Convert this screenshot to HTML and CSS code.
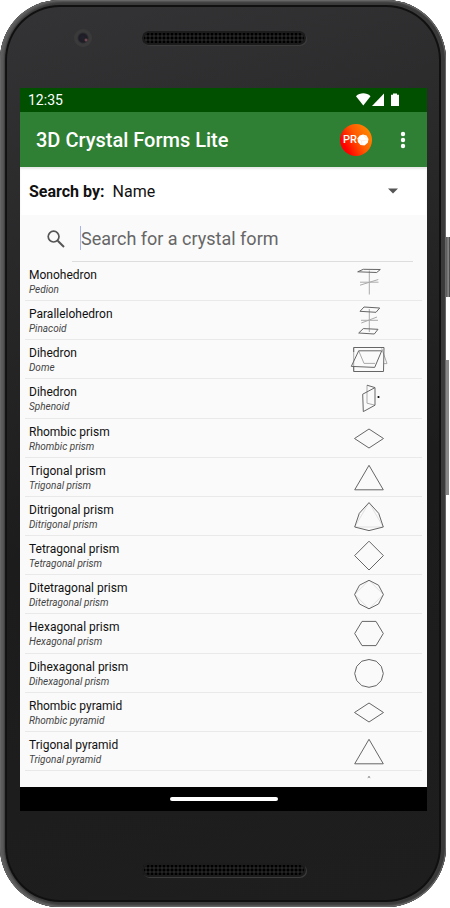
FILE: index.html
```html
<!DOCTYPE html>
<html lang="en">
<head>
    <meta charset="UTF-8">
    <meta name="viewport" content="width=device-width, initial-scale=1.0">
    <title>3D Crystal Forms Lite</title>
    <link rel="stylesheet" href="styles.css">
</head>
<body>
    <div class="phone">
        <span class="side-button power"></span>
        <span class="side-button volume"></span>

        <div class="bezel bezel-top">
            <span class="camera"></span>
            <span class="speaker"></span>
        </div>

        <div class="screen">
            <div class="status-bar">
                <span class="clock">12:35</span>
                <svg class="status-icons" width="44" height="14" viewBox="0 0 44 14" fill="#fff">
                    <path d="M0 3.2C4-.6 10.500-.6 14.500 3.200L7.300 12.500Z"/>
                    <path d="M28 .5V13H16Z"/>
                    <path d="M35 1.700h2V.5h4v1.200h2V13h-8Z"/>
                </svg>
            </div>

            <header class="app-bar">
                <h1>3D Crystal Forms Lite</h1>
                <button class="pro-btn" aria-label="Get the PRO version">
                    <span>PR</span>
                    <svg width="12" height="12" viewBox="0 0 12 12">
                        <path d="M6 .5 9.500 1.600 11.500 5 10.800 8.800 7.500 11.400 3.500 10.900.8 8 .6 4.200 2.700 1.400Z" fill="#fff"/>
                        <path d="M1 4.500 4.500 6.800 10.500 6M4.500 6.800 5 11M6.500.8 8 3.200 11 4.500" fill="none" stroke="#ffd9c4" stroke-width=".5"/>
                    </svg>
                </button>
                <button class="menu-btn" aria-label="More options">
                    <svg width="6" height="18" viewBox="0 0 6 18" fill="#fff">
                        <circle cx="3" cy="3" r="2.200"/>
                        <circle cx="3" cy="9" r="2.200"/>
                        <circle cx="3" cy="15" r="2.200"/>
                    </svg>
                </button>
            </header>

            <div class="filter">
                <label for="searchBy">Search by:</label>
                <select id="searchBy">
                    <option>Name</option>
                </select>
                <svg class="arrow" width="10" height="6" viewBox="0 0 10 6"><path d="M0 .5h10L5 5.500Z" fill="#555"/></svg>
            </div>

            <div class="search">
                <label for="searchInput" aria-label="Search">
                    <svg width="18" height="18" viewBox="0 0 18 18" fill="none" stroke="#555">
                        <circle cx="6.600" cy="6.600" r="5.400" stroke-width="1.700"/>
                        <path d="M10.700 10.700 17 17" stroke-width="2"/>
                    </svg>
                </label>
                <div class="search-field">
                    <span class="caret"></span>
                    <input type="text" id="searchInput" placeholder="Search for a crystal form">
                </div>
            </div>

            <ul class="forms">
                <li>
                    <div class="form-text"><h2>Monohedron</h2><p>Pedion</p></div>
                    <svg class="form-icon" viewBox="0 0 44 39">
                        <path class="faint" d="M22.300 8.500V32.500M13 23.200 31.300 17.500M13 20.200H31.500"/>
                        <path d="M10.700 9.800 16.300 7.300 33.300 7.500 29.700 10.500Z"/>
                    </svg>
                </li>
                <li>
                    <div class="form-text"><h2>Parallelohedron</h2><p>Pinacoid</p></div>
                    <svg class="form-icon" viewBox="0 0 44 39">
                        <path class="faint" d="M22.300 8V31M14.300 22 30 16M14 19.300H31"/>
                        <path d="M13 10.300 17 6 32.700 7 29 11.300ZM11.700 32 16.300 27.600 31 28.300 27.300 33Z"/>
                    </svg>
                </li>
                <li>
                    <div class="form-text"><h2>Dihedron</h2><p>Dome</p></div>
                    <svg class="form-icon" viewBox="0 0 44 39">
                        <path class="faint" d="M11.700 10.800 17 23.400H28M37 23.600H40L34.700 8.400M6.700 7.500V31.500"/>
                        <path d="M6.700 12V7.500H37L36.500 31.500H6.700V27M11.700 10.800H34.700L27.700 27.400 4.300 26.400Z"/>
                    </svg>
                </li>
                <li>
                    <div class="form-text"><h2>Dihedron</h2><p>Sphenoid</p></div>
                    <svg class="form-icon" viewBox="0 0 44 39">
                        <path class="faint" d="M20 6.200V24.200L28 26.200"/>
                        <path d="M15.700 15.200 28 8.600V26.200L16.300 32.600ZM20 6.200 28 8.600"/>
                        <circle class="dot" cx="31.500" cy="18" r="1.100"/>
                    </svg>
                </li>
                <li>
                    <div class="form-text"><h2>Rhombic prism</h2><p>Rhombic prism</p></div>
                    <svg class="form-icon" viewBox="0 0 44 39"><path d="M22 10 36.500 19.500 22 29 7.500 19.500Z"/></svg>
                </li>
                <li>
                    <div class="form-text"><h2>Trigonal prism</h2><p>Trigonal prism</p></div>
                    <svg class="form-icon" viewBox="0 0 44 39"><path d="M22 7.300 36.300 31.800H7.700Z"/></svg>
                </li>
                <li>
                    <div class="form-text"><h2>Ditrigonal prism</h2><p>Ditrigonal prism</p></div>
                    <svg class="form-icon" viewBox="0 0 44 39">
                        <path class="guide" d="M22 5.600 36.300 30H7.700Z"/>
                        <path d="M22 5.600 31.700 16.300 36.300 30 22 33.600 7.700 30 12.300 16.300Z"/>
                    </svg>
                </li>
                <li>
                    <div class="form-text"><h2>Tetragonal prism</h2><p>Tetragonal prism</p></div>
                    <svg class="form-icon" viewBox="0 0 44 39"><path d="M22 5.200 36.400 19.600 22 34 7.600 19.600Z"/></svg>
                </li>
                <li>
                    <div class="form-text"><h2>Ditetragonal prism</h2><p>Ditetragonal prism</p></div>
                    <svg class="form-icon" viewBox="0 0 44 39">
                        <path class="guide" d="M22 5.300 36.400 19.500 22 33.800 7.600 19.500Z"/>
                        <path d="M22 5.300 31.500 10.200 36.400 19.500 31.500 29 22 33.800 12.500 29 7.600 19.500 12.500 10.200Z"/>
                    </svg>
                </li>
                <li>
                    <div class="form-text"><h2>Hexagonal prism</h2><p>Hexagonal prism</p></div>
                    <svg class="form-icon" viewBox="0 0 44 39"><path d="M15 7.400H29L36.300 19.500 29 31.600H15L7.700 19.500Z"/></svg>
                </li>
                <li>
                    <div class="form-text"><h2>Dihexagonal prism</h2><p>Dihexagonal prism</p></div>
                    <svg class="form-icon" viewBox="0 0 44 39"><path d="M22 5.500 29.200 7.200 34.300 12.400 36.300 19.500 34.300 26.600 29.200 31.600 22 33.300 14.800 31.600 9.700 26.600 7.700 19.500 9.700 12.400 14.800 7.200Z"/></svg>
                </li>
                <li>
                    <div class="form-text"><h2>Rhombic pyramid</h2><p>Rhombic pyramid</p></div>
                    <svg class="form-icon" viewBox="0 0 44 39"><path d="M22 10 36.500 19.500 22 29 7.500 19.500Z"/></svg>
                </li>
                <li>
                    <div class="form-text"><h2>Trigonal pyramid</h2><p>Trigonal pyramid</p></div>
                    <svg class="form-icon" viewBox="0 0 44 39"><path d="M22 7.300 36.300 31.800H7.700Z"/></svg>
                </li>
                <li class="partial">
                    <svg class="form-icon" viewBox="0 0 44 39"><path d="M20.800 6.600 22 5.600 23.200 6.600"/></svg>
                </li>
            </ul>

            <div class="nav-bar"><span class="nav-handle"></span></div>
        </div>

        <div class="bezel bezel-bottom">
            <span class="speaker"></span>
        </div>
    </div>
</body>
</html>
```
FILE: styles.css
```css
* {
    box-sizing: border-box;
}
body {
    margin: 0;
    padding: 0 4px 1px 0;
    background-color: #fff;
    color: #111;
    font-family: Roboto, "Liberation Sans", sans-serif;
}
h1, h2, p, ul {
    margin: 0;
    padding: 0;
}
button {
    padding: 0;
    border: none;
    background: none;
    color: #fff;
    font-family: inherit;
    cursor: pointer;
}
svg {
    display: block;
    flex: none;
}

/* phone body */
.phone {
    position: relative;
    display: flex;
    flex-direction: column;
    height: calc(100vh - 1px);
    min-height: 720px;
    padding: 0 19px 0 20px;
    border-radius: 60px;
    background: linear-gradient(165deg, #343436 0%, #29292a 25%, #1c1c1d 55%, #1e1e1f 100%);
    box-shadow: inset 0 0 0 1px #666, inset 2px 0 2px 2px #5c5c5c, inset 0 0 0 5px #3a3a3a, inset 0 0 0 7px #101010;
}
.side-button {
    position: absolute;
    left: 100%;
    width: 4px;
    background: linear-gradient(90deg, #555, #888 60%, #333);
}
.power {
    top: 237px;
    height: 60px;
}
.volume {
    top: 360px;
    width: 3px;
    height: 135px;
    background: #888;
}
.bezel {
    flex: none;
    display: grid;
    grid-template-columns: 1fr 164px 1fr;
    align-items: center;
}
.bezel-top {
    height: 88px;
    padding-bottom: 12px;
}
.bezel-bottom {
    height: 96px;
    padding-top: 22px;
}
.camera {
    grid-column: 1;
    justify-self: center;
    width: 18px;
    height: 18px;
    margin-left: 4px;
    border-radius: 50%;
    background: radial-gradient(circle at 12px 11px, #a05a60 0, transparent 2px), radial-gradient(circle, #23222c 0, #1e1d26 4px, #3a3a3b 6px, #3a3a3b 100%);
}
.speaker {
    grid-column: 2;
    height: 14px;
    border-radius: 7px;
    background: radial-gradient(circle, #000 1px, transparent 2px) 0 1px / 4px 4px, #242424;
    box-shadow: inset 0 0 0 2px #1c1c1c, 1px 1px 0 #3c3c3c;
}

/* screen */
.screen {
    flex: 1;
    display: flex;
    flex-direction: column;
    min-height: 0;
    background-color: #fafafa;
}
.status-bar {
    flex: none;
    display: flex;
    justify-content: space-between;
    align-items: center;
    height: 24px;
    padding: 0 27px 0 8px;
    background-color: #005000;
    color: #fff;
    font-size: 14px;
}
.app-bar {
    flex: none;
    display: flex;
    align-items: center;
    height: 55px;
    padding: 0 15px 0 16px;
    background-color: #2f7f34;
    color: #fff;
}
.app-bar h1 {
    flex: 1;
    padding-top: 1px;
    font-size: 20px;
    font-weight: 500;
}
.pro-btn {
    display: flex;
    justify-content: center;
    align-items: center;
    width: 32px;
    height: 32px;
    margin-right: 22px;
    border-radius: 50%;
    background: linear-gradient(60deg, #f00 20%, #ff5a00 55%, #ff9800 100%);
    font-size: 11px;
    font-weight: 500;
}
.menu-btn {
    display: flex;
    justify-content: center;
    width: 18px;
}
.filter {
    flex: none;
    display: flex;
    align-items: center;
    height: 48px;
    padding: 0 29px 0 9px;
    background-color: #fff;
    box-shadow: inset 0 2px 2px #e8e8e8;
    font-size: 16px;
}
.filter label {
    margin-right: 8px;
    font-weight: 700;
}
.filter select {
    flex: 1;
    padding: 0;
    border: none;
    background: none;
    color: #111;
    font: inherit;
    appearance: none;
}
.search {
    flex: none;
    display: flex;
    align-items: center;
    height: 47px;
    padding: 0 14px 0 27px;
}
.search-field {
    flex: 1;
    display: flex;
    align-items: center;
    height: 47px;
    margin-left: 7px;
    padding-left: 8px;
    border-bottom: 1px solid #ddd;
}
.caret {
    width: 1px;
    height: 24px;
    background-color: #aab4e8;
}
.search-field input {
    flex: 1;
    min-width: 0;
    padding: 0;
    border: none;
    outline: none;
    background: none;
    color: #111;
    font: inherit;
    font-size: 18px;
}
.search-field input::placeholder {
    color: #666;
}

/* list of forms, the rows share the height that is left */
.forms {
    flex: 1;
    display: flex;
    flex-direction: column;
    min-height: 0;
    margin: 0 5px;
    overflow: hidden;
    list-style: none;
}
.forms li {
    flex: 1;
    display: flex;
    justify-content: space-between;
    min-height: 0;
    padding: 0 31px 0 4px;
    border-bottom: 1px solid #e9e9e9;
}
.forms .partial {
    flex: 0 0 16px;
    justify-content: flex-end;
    border-bottom: none;
}
.form-text {
    padding-top: 5px;
}
.form-text h2 {
    font-size: 12px;
    font-weight: 400;
    line-height: 16px;
}
.form-text p {
    color: #444;
    font-size: 10px;
    font-style: italic;
    line-height: 14px;
}
.form-icon {
    width: 44px;
    height: 39px;
    fill: none;
    stroke: #666;
    stroke-width: 1;
}
.form-icon .faint {
    stroke: #aaa;
}
.form-icon .guide {
    stroke: #e2e2e2;
}
.form-icon .dot {
    fill: #000;
    stroke: none;
}

.nav-bar {
    flex: none;
    display: flex;
    justify-content: center;
    align-items: center;
    height: 24px;
    background-color: #000;
}
.nav-handle {
    width: 108px;
    height: 4px;
    border-radius: 2px;
    background-color: #fff;
}
```
